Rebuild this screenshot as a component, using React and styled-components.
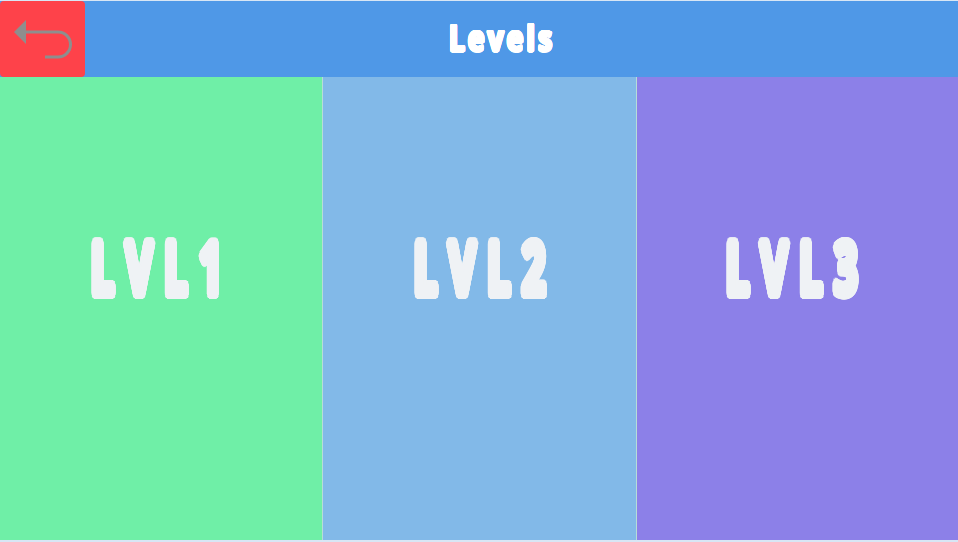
import styled, { createGlobalStyle } from "styled-components";

// rough stand-in for the chunky brush font: fatten the text with a ring of shadows
const fatten = (radius, color) => {
  const rings = [radius, radius / 2];
  const parts = [];
  rings.forEach((r) => {
    for (let i = 0; i < 24; i++) {
      const a = (i / 24) * Math.PI * 2;
      parts.push(`${(Math.cos(a) * r).toFixed(2)}px ${(Math.sin(a) * r).toFixed(2)}px 0 ${color}`);
    }
  });
  return parts.join(", ");
};

const GlobalStyle = createGlobalStyle`
  html, body {
    margin: 0;
    padding: 0;
    background: #d8e6f5;
  }
  body {
    font-family: "Open Sans", "DejaVu Sans", sans-serif;
  }
`;

const Page = styled.div`
  width: 958px;
  height: 542px;
  padding: 1px 0 2px;
  box-sizing: border-box;
  display: flex;
  flex-direction: column;
  overflow: hidden;
`;

const Header = styled.header`
  height: 76px;
  flex: none;
  display: grid;
  grid-template-columns: 85px 1fr 39px;
  align-items: center;
  background-color: #4f98e7;
`;

const BackButton = styled.button`
  height: 100%;
  padding: 0;
  border: 0;
  border-radius: 4px;
  background-color: #fe424a;
  display: flex;
  cursor: pointer;
`;

const Title = styled.h1`
  margin: 0 0 2px;
  text-align: center;
  font-size: 36px;
  font-weight: 700;
  line-height: 74px;
  letter-spacing: 4px;
  color: #fff;
  text-shadow: ${fatten(1.5, "#fff")};
  transform: scaleX(0.78);
`;

const Levels = styled.main`
  flex: 1;
  display: grid;
  grid-template-columns: 322px 313px 1fr;
  column-gap: 1px;
  background-color: #b7dcd8;
`;

const Level = styled.div`
  display: flex;
  align-items: center;
  justify-content: center;
  padding-bottom: 84px;
  padding-left: ${(props) => props.$nudge}px;
  background-color: ${(props) => props.color};
`;

const LevelName = styled.span`
  display: inline-block;
  font-size: 71px;
  font-weight: 700;
  line-height: 1;
  letter-spacing: 20px;
  color: #eff2f5;
  text-shadow: ${fatten(5, "#eff2f5")};
  transform: scaleX(0.58);
`;

const BackIcon = () => (
  <svg width="85" height="76" viewBox="0 0 85 76">
    <path d="M14 31 L26 19 V43 Z" fill="#8e8e8e" />
    <path
      d="M25 31 H58 A12.5 12.5 0 0 1 58 56 H45"
      fill="none"
      stroke="#8e8e8e"
      strokeWidth="3"
    />
  </svg>
);

const levels = [
  { name: "LVL1", color: "#6fefa7", nudge: 3 },
  { name: "LVL2", color: "#82b9e8", nudge: 11 },
  { name: "LVL3", color: "#8c80e8", nudge: 0 },
];

export default function App() {
  return (
    <Page>
      <GlobalStyle />
      <Header>
        <BackButton aria-label="Back">
          <BackIcon />
        </BackButton>
        <Title>Levels</Title>
      </Header>
      <Levels>
        {levels.map((level) => (
          <Level key={level.name} color={level.color} $nudge={level.nudge}>
            <LevelName>{level.name}</LevelName>
          </Level>
        ))}
      </Levels>
    </Page>
  );
}
